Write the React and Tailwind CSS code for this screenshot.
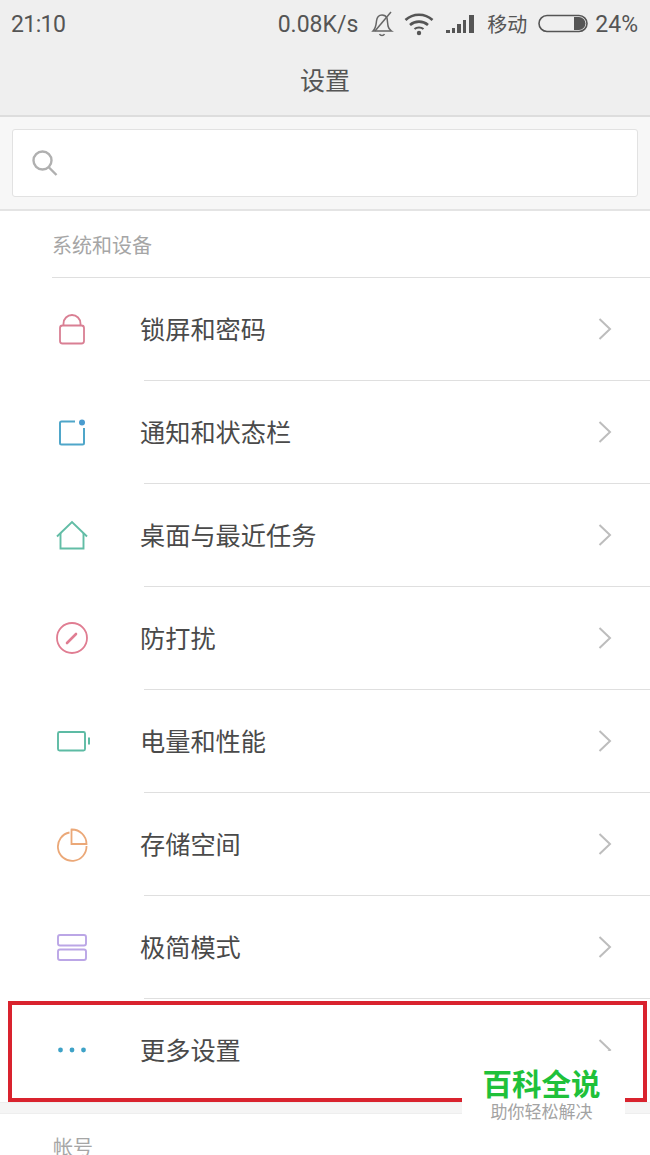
const FONT = "font-['Noto_Sans_CJK_SC','Noto_Sans_CJK_JP',sans-serif]";

const Chevron = () => (
  <svg width="16" height="24" viewBox="0 0 16 24" fill="none" stroke="#bdbdbd" strokeWidth="2">
    <path d="M2.5 2 L13 12 L2.5 22" />
  </svg>
);

const icons = {
  lock: (
    <svg width="36" height="36" viewBox="0 0 36 36" fill="none" stroke="#d97f93" strokeWidth="1.8">
      <rect x="6" y="14.5" width="24" height="18" rx="2.5" />
      <path d="M9.5 14.5 V12.5 a8.5 8.5 0 0 1 17 0 V14.5" />
    </svg>
  ),
  notify: (
    <svg width="36" height="36" viewBox="0 0 36 36" fill="none" stroke="#4fa6c9" strokeWidth="2">
      <path d="M21 7.5 H7.5 a1.5 1.5 0 0 0 -1.5 1.5 V29 a1.5 1.5 0 0 0 1.5 1.5 H28.5 a1.5 1.5 0 0 0 1.5 -1.5 V14" />
      <circle cx="28" cy="8.5" r="3" fill="#4a9ccf" stroke="none" />
    </svg>
  ),
  home: (
    <svg width="36" height="36" viewBox="0 0 36 36" fill="none" stroke="#62bda6" strokeWidth="1.9">
      <path d="M3 19.5 L18 5 L33 19.5" />
      <path d="M6.5 16 V31.5 H29.5 V16" />
    </svg>
  ),
  dnd: (
    <svg width="36" height="36" viewBox="0 0 36 36" fill="none" stroke="#e07d92" strokeWidth="1.8">
      <circle cx="18" cy="18" r="15" />
      <path d="M13 23 L22 14" strokeWidth="2.6" strokeLinecap="round" />
    </svg>
  ),
  battery: (
    <svg width="36" height="36" viewBox="0 0 36 36" fill="none" stroke="#5dbba4" strokeWidth="1.9">
      <rect x="4" y="9" width="27" height="18.5" rx="1.5" />
      <path d="M35 14.5 V21.5" strokeWidth="2" />
    </svg>
  ),
  storage: (
    <svg width="36" height="36" viewBox="0 0 36 36" fill="none" stroke="#eba878" strokeWidth="1.8">
      <path d="M15.5 6.5 A14.3 14.3 0 1 0 32.5 20" />
      <path d="M17.5 3.5 A14.5 14.5 0 0 1 32.5 18 H17.5 Z" />
    </svg>
  ),
  simple: (
    <svg width="36" height="36" viewBox="0 0 36 36" fill="none" stroke="#bba6e6" strokeWidth="1.9">
      <rect x="4" y="6" width="28" height="10.5" rx="2" />
      <rect x="4" y="20.5" width="28" height="10.5" rx="2" />
    </svg>
  ),
  more: (
    <svg width="36" height="36" viewBox="0 0 36 36" fill="#3ea2c7">
      <circle cx="6.5" cy="18" r="2.4" />
      <circle cx="18" cy="18" r="2.4" />
      <circle cx="29.5" cy="18" r="2.4" />
    </svg>
  ),
};

const rows = [
  ["lock", "锁屏和密码"],
  ["notify", "通知和状态栏"],
  ["home", "桌面与最近任务"],
  ["dnd", "防打扰"],
  ["battery", "电量和性能"],
  ["storage", "存储空间"],
  ["simple", "极简模式"],
  ["more", "更多设置"],
];

function Row({ icon, label, last }) {
  return (
    <div className="relative flex h-[103px] items-center pb-[2px] pl-[54px] pr-[37px]">
      <div className="flex h-9 w-9 shrink-0 items-center justify-center">{icons[icon]}</div>
      <div className="ml-[50px] flex-1 text-[25.2px] leading-none text-[#4a4a4a]">{label}</div>
      <Chevron />
      {!last && <div className="absolute bottom-0 left-[144px] right-0 h-px bg-[#dfdfdf]" />}
    </div>
  );
}

export default function App() {
  return (
    <div className={`relative h-[1155px] w-[650px] overflow-hidden bg-white ${FONT}`}>
      <header className="h-[117px] border-b-2 border-[#dddddd] bg-[#efefef]">
        <div className="flex h-[48px] items-center justify-between pl-[11px] pr-[12px] text-[#555555]">
          <span className="font-['Roboto',sans-serif] text-[23px] leading-none tracking-[-0.6px]">21:10</span>
          <div className="flex items-center">
            <span className="font-['Roboto',sans-serif] text-[23px] leading-none">0.08K/s</span>
            <svg className="ml-[12px]" width="24" height="28" viewBox="0 0 24 28" fill="none" stroke="#666" strokeWidth="1.5">
              <path d="M3 21 C6 18 6 15 6.5 11 C7 7 9.5 5 12 5 C14 5 16 6 17 8 L18 16 C18.5 18.5 20 20 21.5 21 H3 Z" />
              <path d="M9.5 24 C10.5 26 13.5 26 14.5 24" />
              <path d="M21 2 L5 21" />
            </svg>
            <svg className="ml-[10px]" width="30" height="24" viewBox="0 0 30 24" fill="none" stroke="#555" strokeWidth="2.6">
              <path d="M1.5 8 C9 1 21 1 28.5 8" />
              <path d="M6 13 C11 8.5 19 8.5 24 13" />
              <path d="M10.5 17 C13 15 17 15 19.5 17" strokeWidth="2.2" />
              <circle cx="15" cy="21" r="2.2" fill="#555" stroke="none" />
            </svg>
            <svg className="ml-[12px]" width="29" height="20" viewBox="0 0 29 20" fill="#555">
              <rect x="0" y="16" width="4" height="3" />
              <rect x="6" y="14" width="3" height="5" />
              <rect x="11" y="10" width="4" height="9" />
              <rect x="17" y="6" width="3" height="13" />
              <rect x="23" y="1" width="5" height="18" />
            </svg>
            <span className="ml-[12px] text-[20px] leading-none">移动</span>
            <svg className="ml-[11px]" width="50" height="20" viewBox="0 0 50 20" fill="none" stroke="#555" strokeWidth="1.6">
              <rect x="1" y="1.5" width="48" height="16" rx="8" />
              <path d="M36 3 H41 A6.5 6.5 0 0 1 41 16 H36 Z" fill="#555" stroke="none" />
            </svg>
            <span className="ml-[7px] font-['Roboto',sans-serif] text-[23px] leading-none">24%</span>
          </div>
        </div>
        <h1 className="mt-px text-center text-[25px] font-normal leading-[60px] text-[#555555]">设置</h1>
      </header>

      <div className="h-[94px] border-b-2 border-[#e4e4e4] bg-[#f7f7f7] px-[12px] pt-[12px]">
        <div className="flex h-[68px] items-center rounded-[3px] border border-[#e2e2e2] bg-white pl-[18px]">
          <svg width="28" height="28" viewBox="0 0 28 28" fill="none" stroke="#b0b0b0" strokeWidth="2.4">
            <circle cx="11.5" cy="11.5" r="9" />
            <path d="M18 18.5 L25.5 26" />
          </svg>
        </div>
      </div>

      <div className="ml-[52px] flex h-[67px] items-center border-b border-[#dfdfdf] pt-[2px] text-[20px] leading-none text-[#a6a6a6]">系统和设备</div>

      {rows.map(([icon, label], i) => (
        <Row key={icon} icon={icon} label={label} last={i === rows.length - 1} />
      ))}

      <div className="h-[12px] border-y border-[#eeeeee] bg-[#f5f5f5]" />
      <div className="ml-[53px] mt-[23px] text-[20px] leading-none text-[#a6a6a6]">帐号</div>

      <div className="absolute left-[8px] top-[1001px] h-[101px] w-[639px] border-[4px] border-[#d9232e]" />

      <div className="absolute left-[462px] top-[1051px] flex h-[79px] w-[163px] flex-col items-center bg-white pr-[4px]">
        <div className="mt-[14px] text-[29.5px] font-bold leading-[34px] text-[#1fc13a]">百科全说</div>
        <div className="mt-[2px] text-[17px] leading-[20px] text-[#a3a3a3]">助你轻松解决</div>
      </div>
    </div>
  );
}
